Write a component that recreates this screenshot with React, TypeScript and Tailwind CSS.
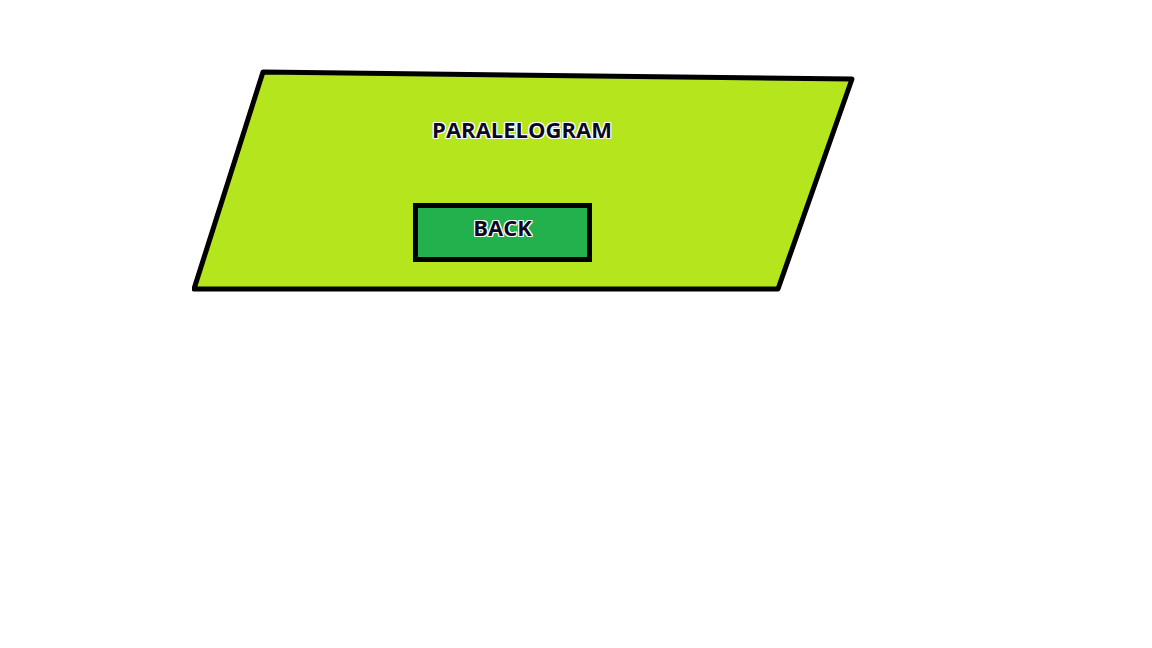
import React from 'react';

const outline = '[text-shadow:1px_0_0_#fff,-1px_0_0_#fff,0_1px_0_#fff,0_-1px_0_#fff,1px_1px_0_#fff,-1px_-1px_0_#fff,1px_-1px_0_#fff,-1px_1px_0_#fff]';

export default function App() {
  return (
    <div className="min-h-[648px] w-full bg-white pl-[192px] pt-[69px]" style={{ fontFamily: '"Open Sans", "Liberation Sans", sans-serif' }}>
      <div className="relative w-[664px] h-[223px]">
        {/* hand drawn parallelogram */}
        <svg className="absolute inset-0" width="664" height="223" viewBox="0 0 664 223">
          <polygon
            points="71,3 660,10 586,220 2,220"
            fill="#b5e61d"
            stroke="#000"
            strokeWidth="5"
            strokeLinejoin="round"
          />
        </svg>
        <div className="relative flex flex-col items-start">
          <h1 className={`mt-[46px] w-[660px] text-center text-[22px] leading-[28px] font-bold text-[#0c0a1e] ${outline}`}>
            PARALELOGRAM
          </h1>
          <button
            className={`mt-[60px] ml-[221px] w-[179px] h-[59px] border-[5px] border-black bg-[#22b14c] text-[22px] font-bold text-[#0c0a1e] pb-[10px] ${outline}`}
          >
            BACK
          </button>
        </div>
      </div>
    </div>
  );
}
